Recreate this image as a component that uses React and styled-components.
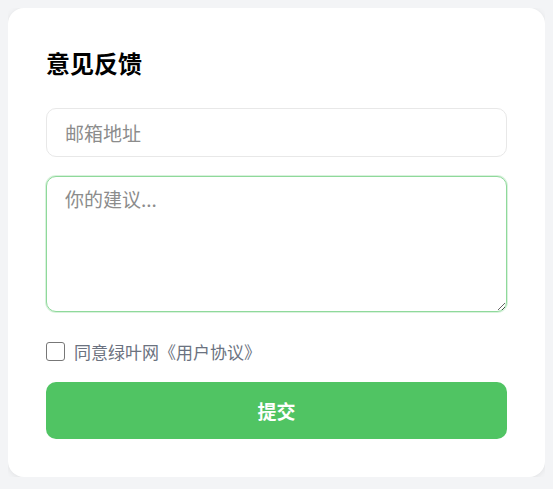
import React from "react";
import styled, { createGlobalStyle } from "styled-components";

const GlobalStyle = createGlobalStyle`
  html, body {
    background: #f3f4f6;
  }
  body {
    margin: 8px;
    font-family: "Noto Sans CJK SC", "Noto Sans", sans-serif;
  }
  * { box-sizing: border-box; }
`;

const Card = styled.form`
  background: #ffffff;
  border-radius: 16px;
  box-shadow: 0 1px 6px rgba(0, 0, 0, 0.08);
  padding: 38px;
  display: flex;
  flex-direction: column;
`;

const Title = styled.h2`
  margin: 0 0 29px;
  font-size: 24px;
  line-height: 33px;
  font-weight: 700;
  color: #000000;
`;

const fieldBase = `
  display: block;
  width: 100%;
  font-family: "Noto Sans CJK SC", "Noto Sans", sans-serif;
  font-size: 19px;
  color: #333;
  background: #fff;
  border-radius: 10px;
  outline: none;
  &::placeholder { color: #8c8c8c; }
`;

const Input = styled.input`
  ${fieldBase}
  height: 49px;
  padding: 0 18px;
  border: 1px solid #e8e8e8;
  margin-bottom: 19px;
`;

const TextArea = styled.textarea`
  ${fieldBase}
  height: 136px;
  padding: 10px 18px;
  line-height: 1.3;
  border: 1px solid #8fd99b;
  box-shadow: 0 0 0 1px rgba(80, 196, 99, 0.22);
  caret-color: #333;
  resize: vertical;
  margin-bottom: 27px;
`;

const AgreeRow = styled.label`
  display: flex;
  align-items: center;
  gap: 9px;
  height: 24px;
  margin-bottom: 19px;
  font-size: 17px;
  color: #6b7280;
  cursor: pointer;
`;

const Check = styled.input`
  appearance: none;
  margin: 0;
  width: 19px;
  height: 19px;
  border: 1.5px solid #777;
  border-radius: 3px;
  background: #fff;
`;

const Submit = styled.button`
  height: 57px;
  border: none;
  border-radius: 10px;
  background: #50c463;
  color: #ffffff;
  font-family: "Noto Sans CJK SC", "Noto Sans", sans-serif;
  font-size: 19px;
  font-weight: 700;
  cursor: pointer;
`;

export default function App() {
  return (
    <>
      <GlobalStyle />
      <Card onSubmit={(e) => e.preventDefault()}>
        <Title>意见反馈</Title>
        <Input type="email" placeholder="邮箱地址" />
        <TextArea placeholder="你的建议..." autoFocus />
        <AgreeRow>
          <Check type="checkbox" />
          同意绿叶网《用户协议》
        </AgreeRow>
        <Submit type="submit">提交</Submit>
      </Card>
    </>
  );
}
